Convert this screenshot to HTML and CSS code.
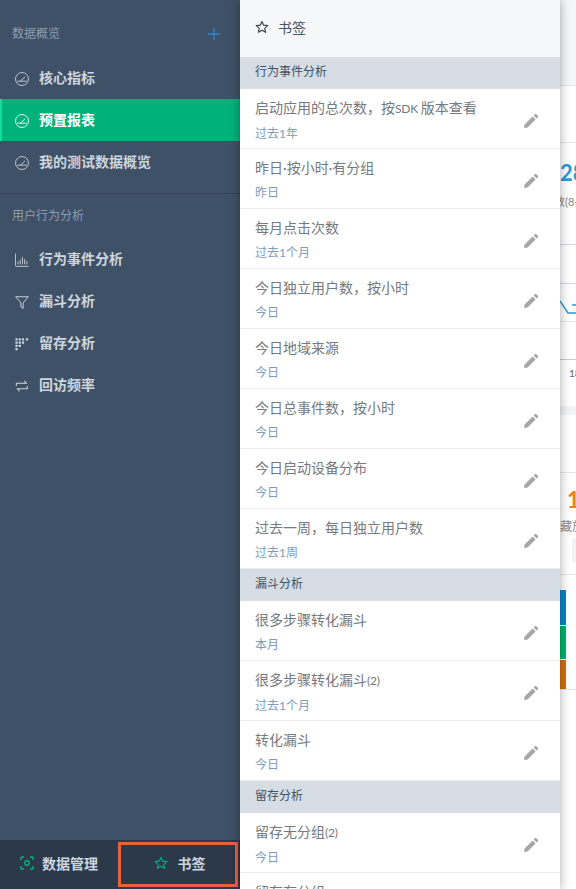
FILE: index.html
```html
<!DOCTYPE html>
<html lang="zh">
<head>
<meta charset="utf-8">
<title>书签</title>
<link rel="stylesheet" href="styles.css">
</head>
<body>
<svg class="defs" width="0" height="0">
  <defs>
    <symbol id="i-gauge" viewBox="0 0 16 16"><circle cx="8" cy="8" r="7.400" fill="none" stroke="currentColor" stroke-width="1"/><path d="M2.500 10.500h11M6 10.500l5.500-5" fill="none" stroke="currentColor" stroke-width="1"/></symbol>
    <symbol id="i-pencil" viewBox="0 0 16 16"><path d="M1 15l.6-3.6 8-8 3 3-8 8zM10.600 2.400l1.500-1.500c.3-.3.700-.3 1 0l2 2c.3.3.3.700 0 1l-1.500 1.500z" fill="currentColor"/></symbol>
    <symbol id="i-star" viewBox="0 0 16 16"><path d="M8 1.600l1.900 4.300 4.700.5-3.500 3.100 1 4.600L8 11.700l-4.100 2.400 1-4.600-3.500-3.100 4.700-.5z" fill="none" stroke="currentColor" stroke-width="1.300" stroke-linejoin="round"/></symbol>
  </defs>
</svg>
<div class="app">
  <aside class="sidebar">
    <div class="side-scroll">
      <div class="group-title first"><span>数据概览</span><svg class="plus" viewBox="0 0 12 12"><path d="M6 0v12M0 6h12" stroke="currentColor" stroke-width="1.400"/></svg></div>
      <a class="nav"><svg class="nav-ico"><use href="#i-gauge"/></svg><span>核心指标</span></a>
      <a class="nav active"><svg class="nav-ico"><use href="#i-gauge"/></svg><span>预置报表</span></a>
      <a class="nav"><svg class="nav-ico"><use href="#i-gauge"/></svg><span>我的测试数据概览</span></a>
      <div class="side-rule"></div>
      <div class="group-title"><span>用户行为分析</span></div>
      <a class="nav"><svg class="nav-ico" viewBox="0 0 16 16"><path d="M.500 .500v13.500c0 .8.4 1.300 1.300 1.300h13.700M3.500 13V9.500M6 13V7.500M8.500 13V4.500M11 13V7M13.500 13V9" fill="none" stroke="currentColor"/></svg><span>行为事件分析</span></a>
      <a class="nav"><svg class="nav-ico" viewBox="0 0 16 16"><path d="M.800 2h14.400L9.300 9v6.300L6.700 13.500V9z" fill="none" stroke="currentColor" stroke-width="1.100"/></svg><span>漏斗分析</span></a>
      <a class="nav"><svg class="nav-ico" viewBox="0 0 16 16"><path d="M.500 1.500h2.500v2.500H.500zM4.200 1.500h2.500v2.500H4.200zM7.900 1.500h2.500v2.500H7.900zM12.500 1.500h2.500v2.500h-2.500zM.500 5.200h2.500v2.500H.500zM4.200 5.200h2.500v2.500H4.200zM7.900 5.200h2.500v2.500H7.900zM.500 8.900h2.500v2.500H.500zM4.200 8.900h2.500v2.500H4.200zM.500 12.600h2.500v2.500H.500z" fill="currentColor"/></svg><span>留存分析</span></a>
      <a class="nav"><svg class="nav-ico" viewBox="0 0 16 16"><path d="M1.500 8V4.800h11.500L10.500 2M14 8v3.200H2.800l2.500 2.800" fill="none" stroke="currentColor" stroke-width="1.200"/></svg><span>回访频率</span></a>
    </div>
    <div class="side-foot">
      <a class="foot-tab data"><svg class="foot-ico" viewBox="0 0 14 14"><path d="M4 1H1.500a.5.5 0 0 0-.5.5V4M10 1h2.500a.5.5 0 0 1 .5.5V4M4 13H1.500a.5.5 0 0 1-.5-.5V10M10 13h2.500a.5.5 0 0 0 .5-.5V10" fill="none" stroke="currentColor" stroke-width="1.400"/><circle cx="7" cy="7" r="2.300" fill="none" stroke="currentColor" stroke-width="1.400"/></svg><span>数据管理</span></a>
      <a class="foot-tab marked"><svg class="foot-ico"><use href="#i-star"/></svg><span>书签</span></a>
    </div>
  </aside>

  <section class="panel">
    <header class="panel-head"><svg class="head-star"><use href="#i-star"/></svg><span>书签</span></header>
    <h3 class="section">行为事件分析</h3>
    <div class="row"><div class="row-text"><p class="row-title">启动应用的总次数，按<span class="latin">SDK </span>版本查看</p><p class="row-sub">过去1年</p></div><svg class="edit"><use href="#i-pencil"/></svg></div>
    <div class="row"><div class="row-text"><p class="row-title">昨日·按小时·有分组</p><p class="row-sub">昨日</p></div><svg class="edit"><use href="#i-pencil"/></svg></div>
    <div class="row"><div class="row-text"><p class="row-title">每月点击次数</p><p class="row-sub">过去1个月</p></div><svg class="edit"><use href="#i-pencil"/></svg></div>
    <div class="row"><div class="row-text"><p class="row-title">今日独立用户数，按小时</p><p class="row-sub">今日</p></div><svg class="edit"><use href="#i-pencil"/></svg></div>
    <div class="row"><div class="row-text"><p class="row-title">今日地域来源</p><p class="row-sub">今日</p></div><svg class="edit"><use href="#i-pencil"/></svg></div>
    <div class="row"><div class="row-text"><p class="row-title">今日总事件数，按小时</p><p class="row-sub">今日</p></div><svg class="edit"><use href="#i-pencil"/></svg></div>
    <div class="row"><div class="row-text"><p class="row-title">今日启动设备分布</p><p class="row-sub">今日</p></div><svg class="edit"><use href="#i-pencil"/></svg></div>
    <div class="row"><div class="row-text"><p class="row-title">过去一周，每日独立用户数</p><p class="row-sub">过去1周</p></div><svg class="edit"><use href="#i-pencil"/></svg></div>
    <h3 class="section">漏斗分析</h3>
    <div class="row"><div class="row-text"><p class="row-title">很多步骤转化漏斗</p><p class="row-sub">本月</p></div><svg class="edit"><use href="#i-pencil"/></svg></div>
    <div class="row"><div class="row-text"><p class="row-title">很多步骤转化漏斗<span class="latin">(2)</span></p><p class="row-sub">过去1个月</p></div><svg class="edit"><use href="#i-pencil"/></svg></div>
    <div class="row"><div class="row-text"><p class="row-title">转化漏斗</p><p class="row-sub">今日</p></div><svg class="edit"><use href="#i-pencil"/></svg></div>
    <h3 class="section">留存分析</h3>
    <div class="row"><div class="row-text"><p class="row-title">留存无分组<span class="latin">(2)</span></p><p class="row-sub">今日</p></div><svg class="edit"><use href="#i-pencil"/></svg></div>
    <div class="row"><div class="row-text"><p class="row-title">留存有分组</p><p class="row-sub">今日</p></div><svg class="edit"><use href="#i-pencil"/></svg></div>
  </section>

  <main class="behind">
    <div class="b b1"></div>
    <div class="b b2"></div>
    <div class="b b3"><span class="big blue">28</span><span class="note">数(8-</span></div>
    <div class="b b4"></div>
    <div class="b b5"><svg class="spark" viewBox="0 0 16 20"><path d="M0 1l8 12h8M12 5h4" fill="none" stroke="#2a9bd8" stroke-width="1.500"/></svg></div>
    <div class="b b5b"></div>
    <div class="b b6"><span class="axis">18</span></div>
    <div class="b b7"></div>
    <div class="b b8"><span class="big orange">1</span><span class="note cut">藏放</span><span class="chip"></span></div>
    <div class="b b9"><span class="bar bar-blue"></span><span class="bar bar-green"></span><span class="bar bar-orange"></span></div>
  </main>
</div>
</body>
</html>
```

FILE: styles.css
```css
* { box-sizing: border-box; }
html, body { margin: 0; height: 100%; overflow: hidden; }
body { font-family: Lato, "Noto Sans CJK SC", sans-serif; background: #fff; }
.defs { position: absolute; }
p, h3 { margin: 0; }

.app { display: flex; width: 576px; height: 889px; overflow: hidden; }

.sidebar { flex: 0 0 240px; height: 889px; background: #3f5167; display: flex; flex-direction: column; }
.side-scroll { flex: 1; }
.group-title { display: flex; justify-content: space-between; align-items: center; height: 22px; margin-top: 11px; padding: 0 20px 0 12px; font-size: 12px; line-height: 22px; color: #8e9db0; }
.group-title.first { margin-top: 23px; margin-bottom: 12px; }
.group-title:not(.first) { margin-bottom: 11px; }
.plus { width: 12px; height: 12px; color: #2d85d5; }
.nav { display: flex; align-items: center; height: 42px; padding-left: 15px; font-size: 14px; font-weight: 700; line-height: 40px; color: #cdd5df; }
.nav-ico { width: 14px; height: 14px; margin-right: 10px; margin-top: 1px; flex: none; color: #cdd5df; }
.nav.active { background: #00b27a; color: #fff; box-shadow: inset 2px 0 0 #14dd9c; }
.nav.active .nav-ico { color: #fff; }
.side-rule { height: 1px; margin-top: 10px; background: #35445a; }

.side-foot { display: flex; flex: 0 0 49px; background: #2c394b; }
.foot-tab { display: flex; align-items: center; justify-content: center; gap: 8px; padding-bottom: 4px; font-size: 14px; font-weight: 700; color: #cdd5df; }
.foot-tab.data { flex: 0 0 118px; }
.foot-tab.marked { flex: 0 0 120px; height: 45px; margin-top: 2px; border: 3px solid #e9603f; gap: 10px; padding-left: 3px; padding-bottom: 3px; }
.foot-ico { width: 14px; height: 14px; color: #00b27a; flex: none; }

.panel { position: relative; z-index: 1; flex: 0 0 320px; height: 889px; overflow: hidden; background: #fff; box-shadow: 0 0 10px rgba(0, 0, 0, .35); }
.panel-head { display: flex; align-items: center; height: 57px; padding-left: 15px; padding-bottom: 3px; background: #f6f7f9; font-size: 14px; color: #475669; }
.head-star { width: 14px; height: 14px; margin-right: 9px; color: #36424f; }
.section { height: 32px; padding-left: 15px; background: #d6dde4; font-size: 12px; font-weight: 400; line-height: 29px; color: #3f5167; }
.row { display: flex; align-items: center; justify-content: space-between; height: 60px; padding: 0 21px 0 15px; border-bottom: 1px solid #e9ecef; }
.row-text { padding-top: 4px; }
.row-title { font-size: 14px; line-height: 20px; color: #76797d; }
.latin { font-size: 12px; letter-spacing: -.2px; }
.row-sub { margin-top: 5px; font-size: 12px; line-height: 20px; color: #7d9cbc; }
.edit { width: 16px; height: 16px; margin-top: 4px; color: #a6a6a6; flex: none; }

.behind { flex: 1; display: flex; flex-direction: column; background: #fff; overflow: hidden; }
.b { position: relative; flex: none; overflow: hidden; border-bottom: 1px solid #e4e7ea; font-size: 12px; }
.b1 { height: 86px; background: #f5f6f7; }
.b2 { height: 57px; }
.b3 { height: 102px; border-bottom-color: #d4d9de; }
.b4 { height: 39px; border-bottom-color: #d4d9de; }
.b5 { height: 38px; border-bottom-color: #e4e7ea; }
.b5b { height: 38px; border-bottom-color: #c4ccd4; }
.b6 { height: 46px; border-bottom: 0; }
.b7 { height: 67px; border-top: 9px solid #f3f4f5; }
.b8 { height: 102px; }
.b9 { height: 115px; }
.big { position: absolute; left: 0; font-size: 22px; font-weight: 700; line-height: 30px; }
.blue { top: 15px; color: #2a9bd8; }
.orange { top: 12px; left: 7px; color: #f08018; }
.note { position: absolute; left: -6px; top: 51px; font-size: 11px; line-height: 16px; color: #888; white-space: nowrap; }
.note.cut { left: 0; top: 46px; font-size: 12px; }
.chip { position: absolute; left: 12px; top: 65px; width: 10px; height: 24px; background: #f2f3f4; border-radius: 2px; }
.spark { position: absolute; left: 0; top: 16px; width: 16px; height: 20px; }
.axis { position: absolute; left: 9px; top: 6px; font-size: 10px; line-height: 14px; color: #666; }
.bar { display: block; width: 6px; }
.bar-blue { height: 35px; margin-top: 15px; background: #0a84c6; }
.bar-green { height: 33px; margin-top: 1px; background: #00b36b; }
.bar-orange { height: 29px; margin-top: 1px; background: #d2700f; }
```
